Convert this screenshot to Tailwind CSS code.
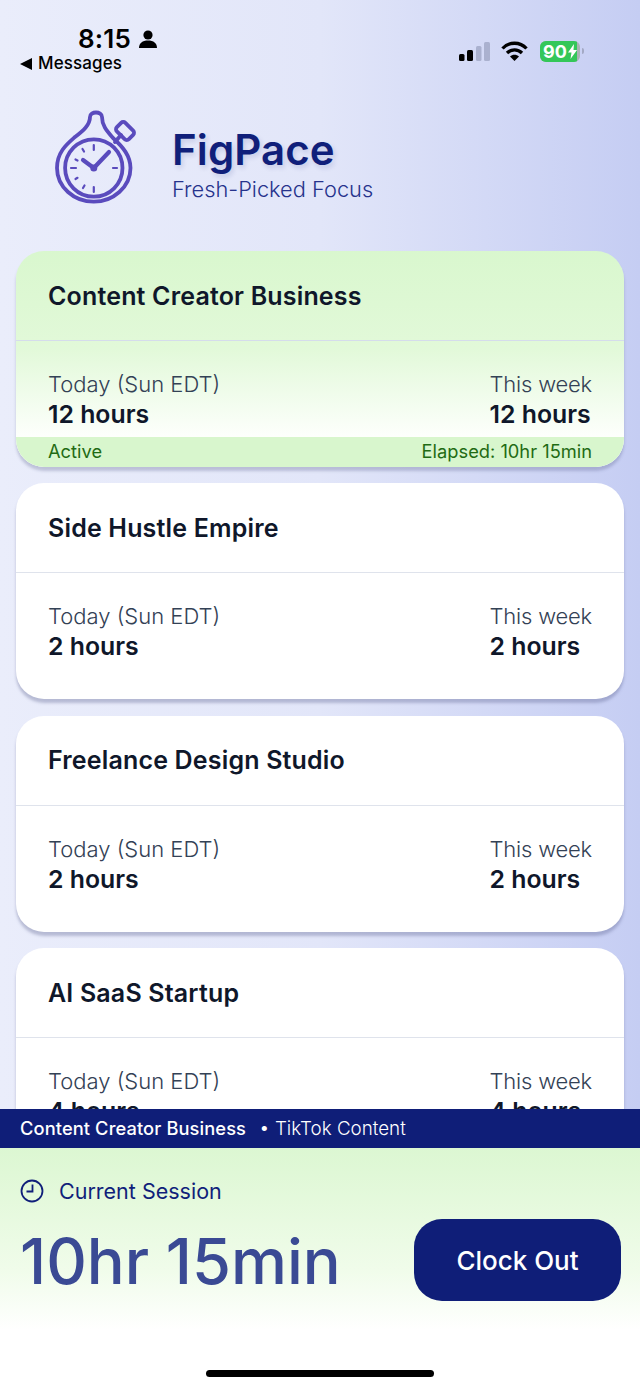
<!DOCTYPE html>
<html lang="en">
<head>
  <meta charset="UTF-8" />
  <meta name="viewport" content="width=device-width, initial-scale=1.0"/>
  <title>FigPace</title>
  <script src="https://cdn.jsdelivr.net/npm/@tailwindcss/browser@4"></script>
</head>
<body class="font-['Inter',sans-serif]">
  <div class="w-[640px] h-[1391px] flex flex-col overflow-hidden bg-[linear-gradient(90deg,#eaedfb_0%,#e2e6f9_50%,#c5cdf3_100%)]">

    <!-- status bar -->
    <div class="h-[105px] shrink-0 flex justify-between">
      <div class="pl-[20px] pt-[24px] text-black">
        <div class="flex items-center ml-[58px] h-[30px]">
          <span class="text-[26px] leading-[30px] font-semibold tracking-[0.2px]">8:15</span>
          <svg class="ml-[8px]" width="18" height="18" viewBox="0 0 18 18"><circle cx="9" cy="5" r="4.6" fill="#000"/><path d="M0 18c0-5 3.500-7.500 9-7.500s9 2.500 9 7.500z" fill="#000"/></svg>
        </div>
        <div class="flex items-center h-[19px]">
          <svg width="13" height="12" viewBox="0 0 13 12"><path d="M0 6 12 0v12z" fill="#000"/></svg>
          <span class="ml-[5px] text-[17px] leading-[19px] font-medium tracking-[0.12px]">Messages</span>
        </div>
      </div>
      <div class="flex items-start pt-[41px] pr-[56px]">
        <svg width="32" height="21" viewBox="0 0 32 21">
          <rect x="0" y="13" width="5.500" height="7" rx="1.500" fill="#000"/>
          <rect x="8" y="9" width="6" height="11" rx="1.500" fill="#000"/>
          <rect x="17" y="5" width="5.500" height="15" rx="1.500" fill="#aab1cf"/>
          <rect x="25" y="1" width="6" height="19" rx="1.500" fill="#aab1cf"/>
        </svg>
        <svg class="ml-[10px]" width="27" height="21" viewBox="0 0 27 21" fill="none" stroke="#000" stroke-width="3.300">
          <path d="M1.500 7.500C8 .5 19 .5 25.500 7.500"/>
          <path d="M6 12c4.200-4.200 10.800-4.200 15 0"/>
          <path d="M13.500 20l-4.500-4.500c2.500-2.200 6.500-2.200 9 0z" fill="#000" stroke="none"/>
        </svg>
        <div class="ml-[12px] relative w-[40px] h-[21px] rounded-[6px] overflow-hidden bg-[#aab1b5]">
          <div class="w-[37px] h-full bg-[#34c759] flex items-center pl-[3px]">
            <span class="text-white text-[18px] leading-[21px] font-bold">90</span>
            <svg class="ml-[1px]" width="9" height="15" viewBox="0 0 9 15"><path d="M6 0 0 8.500h3.500L2.500 15 9 6H5.500z" fill="#fff"/></svg>
          </div>
        </div>
        <div class="ml-[2px] mt-[7px] w-[2px] h-[6px] rounded-r-[2px] bg-[#a3a9c4]"></div>
      </div>
    </div>

    <!-- logo row -->
    <div class="h-[146px] shrink-0 flex items-start pl-[45px]">
      <svg width="100" height="105" viewBox="0 0 100 105" fill="none" stroke="#5a4bbd" stroke-width="3.800" stroke-linecap="round" stroke-linejoin="round">
        <path d="M45 12C45 6 57 6 57 12C57 20 61 25 68 33C78 42 85.500 51 85.500 63C85.500 82 68 96.700 48.800 96.700C29 96.700 12 82 12 63C12 47 22 39 30 32C38 26 45 20 45 12Z"/>
        <circle cx="48.800" cy="63" r="28.700"/>
        <path d="M70 37 76 30"/>
        <rect x="71.500" y="20" width="17" height="12" rx="3" transform="rotate(45 80 26)"/>
        <path d="M48.800 63 64 47M48.800 63 38 55" stroke-width="4.200"/>
        <circle cx="48.800" cy="63" r="3.500" fill="#5a4bbd" stroke="none"/>
        <path d="M48.800 40v5M48.800 82v5M26 63h5M68 63h4" stroke-width="2.200"/>
        <path d="M37.500 44l1.500 2.500M30.500 54.500l2 1M30.500 74l2-1.200M38 83l1.500-2.500" stroke-width="2.200"/>
      </svg>
      <div class="ml-[28px] mt-[18px]">
        <div class="text-[42px] leading-[54px] font-semibold text-[#101f7a] tracking-[0.1px] -ml-[1px] [text-shadow:2px_3px_5px_rgba(16,31,122,0.14)]">FigPace</div>
        <div class="text-[21.800px] leading-[25px] font-light text-[#26338c] -ml-[1px]">Fresh-Picked Focus</div>
      </div>
    </div>

    <!-- project cards -->
    <div class="flex-1 min-h-0 overflow-hidden flex flex-col gap-[16.330px] px-[16px]">

      <div class="shrink-0 h-[216px] rounded-[28px] overflow-hidden flex flex-col bg-[linear-gradient(180deg,#d9f7ce_0%,#e2f9d9_45%,#fdfffc_86%)] shadow-[0_4px_3px_rgba(90,95,140,0.3)]">
        <div class="h-[90px] shrink-0 flex items-center pl-[32px] pt-[2px] border-b border-[#d5dcec] text-[25px] tracking-[0.17px] font-semibold text-[#0f172a]">Content Creator Business</div>
        <div class="flex-1 flex justify-between px-[32px] pt-[28px]">
          <div>
            <div class="text-[22px] leading-[30px] font-light text-[#334155]">Today (Sun EDT)</div>
            <div class="text-[24.800px] leading-[30px] font-semibold text-[#0f172a]">12 hours</div>
          </div>
          <div>
            <div class="text-[22px] leading-[30px] font-light text-[#334155] tracking-[-0.2px]">This week</div>
            <div class="text-[24.800px] leading-[30px] font-semibold text-[#0f172a]">12 hours</div>
          </div>
        </div>
        <div class="h-[30px] shrink-0 flex items-center justify-between px-[32px] bg-[#d8f6cd] text-[18.300px] text-[#1f6b14]">
          <span>Active</span>
          <span>Elapsed: 10hr 15min</span>
        </div>
      </div>

      <div class="shrink-0 h-[216px] rounded-[28px] overflow-hidden flex flex-col bg-white shadow-[0_4px_3px_rgba(90,95,140,0.35)]">
        <div class="h-[90px] shrink-0 flex items-center pl-[32px] pt-[2px] border-b border-[#dfe3ec] text-[25px] tracking-[0.17px] font-semibold text-[#0f172a]">Side Hustle Empire</div>
        <div class="flex-1 flex justify-between px-[32px] pt-[28px]">
          <div>
            <div class="text-[22px] leading-[30px] font-light text-[#334155]">Today (Sun EDT)</div>
            <div class="text-[24.800px] leading-[30px] font-semibold text-[#0f172a]">2 hours</div>
          </div>
          <div>
            <div class="text-[22px] leading-[30px] font-light text-[#334155] tracking-[-0.2px]">This week</div>
            <div class="text-[24.800px] leading-[30px] font-semibold text-[#0f172a]">2 hours</div>
          </div>
        </div>
      </div>

      <div class="shrink-0 h-[216px] rounded-[28px] overflow-hidden flex flex-col bg-white shadow-[0_4px_3px_rgba(90,95,140,0.35)]">
        <div class="h-[90px] shrink-0 flex items-center pl-[32px] pt-[2px] border-b border-[#dfe3ec] text-[25px] tracking-[0.17px] font-semibold text-[#0f172a]">Freelance Design Studio</div>
        <div class="flex-1 flex justify-between px-[32px] pt-[28px]">
          <div>
            <div class="text-[22px] leading-[30px] font-light text-[#334155]">Today (Sun EDT)</div>
            <div class="text-[24.800px] leading-[30px] font-semibold text-[#0f172a]">2 hours</div>
          </div>
          <div>
            <div class="text-[22px] leading-[30px] font-light text-[#334155] tracking-[-0.2px]">This week</div>
            <div class="text-[24.800px] leading-[30px] font-semibold text-[#0f172a]">2 hours</div>
          </div>
        </div>
      </div>

      <div class="shrink-0 h-[216px] rounded-[28px] overflow-hidden flex flex-col bg-white shadow-[0_4px_3px_rgba(90,95,140,0.35)]">
        <div class="h-[90px] shrink-0 flex items-center pl-[32px] pt-[2px] border-b border-[#dfe3ec] text-[25px] tracking-[0.17px] font-semibold text-[#0f172a]">AI SaaS Startup</div>
        <div class="flex-1 flex justify-between px-[32px] pt-[28px]">
          <div>
            <div class="text-[22px] leading-[30px] font-light text-[#334155]">Today (Sun EDT)</div>
            <div class="text-[24.800px] leading-[30px] font-semibold text-[#0f172a]">4 hours</div>
          </div>
          <div>
            <div class="text-[22px] leading-[30px] font-light text-[#334155] tracking-[-0.2px]">This week</div>
            <div class="text-[24.800px] leading-[30px] font-semibold text-[#0f172a]">4 hours</div>
          </div>
        </div>
      </div>
    </div>

    <!-- current session footer -->
    <div class="h-[282px] shrink-0 flex flex-col">
      <div class="h-[39px] shrink-0 flex items-center pl-[20px] pt-[1px] bg-[#0f1e78] text-white">
        <span class="text-[18.300px] font-medium tracking-[0.1px]">Content Creator Business</span>
        <span class="ml-[13px] text-[18.800px] font-light">• TikTok Content</span>
      </div>
      <div class="flex-1 relative bg-[linear-gradient(180deg,#dcf7d2_0%,#f0fcea_50%,#ffffff_75%)] px-[20px]">
        <div class="flex items-center pt-[32px] h-[54px]">
          <svg width="24" height="24" viewBox="0 0 24 24" fill="none" stroke="#101f7a" stroke-width="1.800"><circle cx="12" cy="12" r="10.500"/><path d="M12.500 5.500v7H6.500"/></svg>
          <span class="ml-[15px] text-[21.500px] text-[#101f7a]">Current Session</span>
        </div>
        <div class="flex items-start justify-between pt-[17px]">
          <span class="mt-[1px] text-[63px] leading-[82px] text-[#3a4a94] font-medium">10hr 15min</span>
          <button class="w-[207px] h-[82px] -mr-[1px] rounded-[28px] bg-[#0f1e78] text-white text-[26px] font-medium">Clock Out</button>
        </div>
        <div class="absolute left-[206px] top-[222px] w-[228px] h-[7px] rounded-full bg-black"></div>
      </div>
    </div>
  </div>
</body>
</html>
